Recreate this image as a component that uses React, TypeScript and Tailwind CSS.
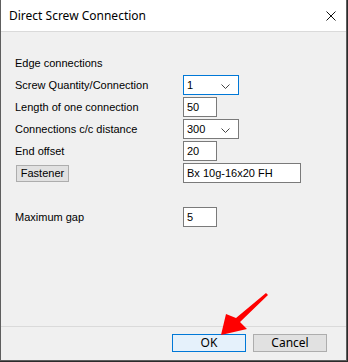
import React from "react";

const Chevron = () => (
  <svg width="9" height="6" viewBox="0 0 9 6" className="absolute right-[8px] top-[8px]">
    <path d="M0.5 0.5 L4.5 4.5 L8.5 0.5" fill="none" stroke="#444" strokeWidth="1" />
  </svg>
);

const Combo = ({ value, focused }: { value: string; focused?: boolean }) => (
  <div
    className={`relative w-[56px] h-[20px] bg-white border ${focused ? "border-[#0078d7]" : "border-[#7a7a7a]"} flex items-center pl-[3px] text-[11px] text-black`}
  >
    {value}
    <Chevron />
  </div>
);

const TextBox = ({ value, w }: { value: string; w: string }) => (
  <div className={`${w} h-[20px] bg-white border border-[#7a7a7a] flex items-center pl-[3px] text-[11px] text-black`}>
    {value}
  </div>
);

const Label = ({ children }: { children: React.ReactNode }) => (
  <div className="h-[20px] flex items-center text-[11px] text-black leading-none">{children}</div>
);

export default function App() {
  return (
    <div className="relative w-[348px] h-[362px] bg-[#2b2b2b]" style={{ fontFamily: "'Liberation Sans', Arial, sans-serif" }}>
      <div className="w-[347px] h-[361px] flex flex-col border-l border-r border-b border-[#5e5e5e] bg-[#f0f0f0]">
        <div className="h-[32px] bg-white border-b border-[#dadada] flex items-center justify-between pl-[8px] pr-[10px] shrink-0">
          <span className="text-[12px] text-black" style={{ fontFamily: "'Noto Sans', sans-serif" }}>
            Direct Screw Connection
          </span>
          <svg width="10" height="10" viewBox="0 0 10 10">
            <path d="M0.5 0.5 L9.5 9.5 M9.5 0.5 L0.5 9.5" stroke="#111" strokeWidth="1" />
          </svg>
        </div>
        <div className="flex-1 pl-[14px] pt-[21px]">
          <div className="grid grid-cols-[168px_auto] gap-y-[2px]">
            <Label>Edge connections</Label>
            <div />
            <Label>Screw Quantity/Connection</Label>
            <Combo value="1" focused />
            <Label>Length of one connection</Label>
            <TextBox value="50" w="w-[34px]" />
            <Label>Connections c/c distance</Label>
            <Combo value="300" />
            <Label>End offset</Label>
            <TextBox value="20" w="w-[34px]" />
            <div className="h-[20px] flex items-center pl-[1px]">
              <div className="w-[53px] h-[17px] bg-[#e1e1e1] border border-[#adadad] flex items-center justify-center text-[11px] text-black">
                Fastener
              </div>
            </div>
            <TextBox value="Bx 10g-16x20 FH" w="w-[118px]" />
          </div>
          <div className="grid grid-cols-[168px_auto] mt-[24px]">
            <Label>Maximum gap</Label>
            <TextBox value="5" w="w-[34px]" />
          </div>
        </div>
        <div className="h-[34px] border-t border-[#dadada] flex items-start justify-end gap-[7px] pr-[19px] pt-[7px] shrink-0">
          <div className="w-[74px] h-[18px] bg-[#e5f1fb] border border-[#0078d7] flex items-center justify-center text-[12px] text-black" style={{ fontFamily: "'Noto Sans', sans-serif" }}>
            OK
          </div>
          <div className="w-[74px] h-[18px] bg-[#e1e1e1] border border-[#adadad] flex items-center justify-center text-[12px] text-black" style={{ fontFamily: "'Noto Sans', sans-serif" }}>
            Cancel
          </div>
        </div>
      </div>
      <svg className="absolute left-0 top-0 pointer-events-none" width="348" height="362" viewBox="0 0 348 362">
        <polygon points="221,335 226,314 236,318 266,293 268,295 240,322 247,329" fill="#ff0000" />
      </svg>
    </div>
  );
}
